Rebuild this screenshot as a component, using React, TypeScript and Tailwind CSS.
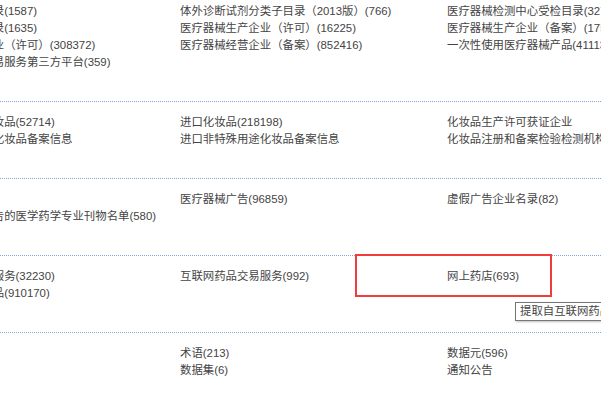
import React from "react";

type Section = { cols: string[][] };

const sections: Section[] = [
  {
    cols: [
      [
        "国家基本药物目录(1587)",
        "国产药品批件目录(1635)",
        "药品零售连锁企业（许可）(308372)",
        "药品网络销售交易服务第三方平台(359)",
      ],
      [
        "体外诊断试剂分类子目录（2013版）(766)",
        "医疗器械生产企业（许可）(16225)",
        "医疗器械经营企业（备案）(852416)",
      ],
      [
        "医疗器械检测中心受检目录(3276)",
        "医疗器械生产企业（备案）(17589)",
        "一次性使用医疗器械产品(41113)",
      ],
    ],
  },
  {
    cols: [
      ["国产特殊用途化妆品(52714)", "国产非特殊用途化妆品备案信息"],
      ["进口化妆品(218198)", "进口非特殊用途化妆品备案信息"],
      ["化妆品生产许可获证企业", "化妆品注册和备案检验检测机构"],
    ],
  },
  {
    cols: [
      ["药品广告(114)", "可发布处方药广告的医学药学专业刊物名单(580)"],
      ["医疗器械广告(96859)"],
      ["虚假广告企业名录(82)"],
    ],
  },
  {
    cols: [
      ["互联网药品信息服务(32230)", "保健食品备案产品(910170)"],
      ["互联网药品交易服务(992)"],
      ["网上药店(693)"],
    ],
  },
  {
    cols: [[], ["术语(213)", "数据集(6)"], ["数据元(596)", "通知公告"]],
  },
];

const FONT = '"Liberation Sans", "Noto Sans CJK SC", sans-serif';

export default function App() {
  return (
    <div
      className="relative w-[601px] h-[400px] overflow-hidden bg-white text-[11.4px] text-[#444]"
      style={{ fontFamily: FONT }}
    >
      <div className="-mt-[10px] -ml-[87px] w-[900px]">
        {sections.map((s, i) => (
          <div
            key={i}
            className={
              "grid grid-cols-[267px_267px_267px] pt-[12px] pb-[30px] " +
              (i === 0 ? "border-t border-transparent" : "border-t border-dotted border-[#86a6dc]")
            }
          >
            {s.cols.map((col, j) => (
              <div key={j} className="flex flex-col">
                {col.map((t, k) => (
                  <div key={k} className="leading-[17px] whitespace-nowrap">
                    {t}
                  </div>
                ))}
              </div>
            ))}
          </div>
        ))}
      </div>

      {/* red highlight annotation */}
      <div className="absolute left-[355px] top-[254px] w-[197px] h-[43px] border-2 border-[#f23b3b]" />

      {/* tooltip */}
      <div className="absolute left-[515px] top-[302px] h-[19px] pl-[4px] pr-[4px] border border-[#767676] bg-white text-[11.4px] leading-[17px] whitespace-nowrap text-[#444] shadow-[1px_1px_2px_rgba(0,0,0,0.25)]">
        提取自互联网药品交易服务审批数据
      </div>
    </div>
  );
}
